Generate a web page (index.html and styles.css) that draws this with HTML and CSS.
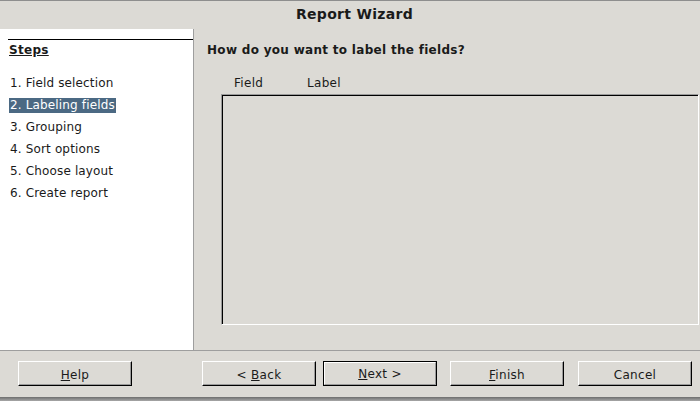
FILE: index.html
```html
<!DOCTYPE html>
<html>
<head>
<meta charset="utf-8">
<link rel="stylesheet" href="styles.css">
</head>
<body>
<div class="window">
  <div class="titlebar">Report Wizard</div>
  <div class="main">
    <div class="steps">
      <div class="steps-head"><span class="steps-title">Steps</span></div>
      <ol class="step-list">
        <li class="step">1. Field selection</li>
        <li class="step"><span class="selected">2. Labeling fields</span></li>
        <li class="step">3. Grouping</li>
        <li class="step">4. Sort options</li>
        <li class="step">5. Choose layout</li>
        <li class="step">6. Create report</li>
      </ol>
    </div>
    <div class="content">
      <div class="question">How do you want to label the fields?</div>
      <div class="columns">
        <span class="col-field">Field</span>
        <span class="col-label">Label</span>
      </div>
      <div class="listbox"></div>
    </div>
  </div>
  <div class="buttonbar">
    <button class="btn btn-help"><u>H</u>elp</button>
    <div class="nav">
      <button class="btn">&lt; <u>B</u>ack</button>
      <button class="btn btn-default"><span class="inner"><u>N</u>ext &gt;</span></button>
      <button class="btn btn-finish"><u>F</u>inish</button>
      <button class="btn">Cancel</button>
    </div>
  </div>
  <div class="bottom-edge"></div>
</div>
</body>
</html>
```

FILE: styles.css
```css
* { box-sizing: border-box; }
html, body {
  margin: 0;
  padding: 0;
  background: #dcdad5;
}
body {
  font-family: "DejaVu Sans", "Liberation Sans", sans-serif;
  font-size: 12px;
  letter-spacing: 0.3px;
  color: #1a1a1a;
}
.window {
  width: 700px;
  height: 401px;
  display: flex;
  flex-direction: column;
  border-top: 1px solid #8e8e8e;
  background: #dcdad5;
}
.titlebar {
  height: 28px;
  line-height: 27px;
  text-align: center;
  font-weight: bold;
  font-size: 14px;
  padding-left: 9px;
  color: #1a1a1a;
}
.main {
  display: flex;
  height: 323px;
  border-bottom: 1px solid #9e9e9e;
}
.steps {
  width: 194px;
  background: #fff;
  border-right: 1px solid #9e9e9e;
  padding-top: 10px;
}
.steps-head {
  margin-left: 8px;
  border-top: 1px solid #000;
  padding-top: 2px;
  padding-left: 1px;
  line-height: 16px;
}
.steps-title {
  font-weight: bold;
  text-decoration: underline;
}
.step-list {
  list-style: none;
  margin: 14px 0 0 0;
  padding: 0 0 0 9px;
  letter-spacing: 0.15px;
}
.step {
  height: 22px;
  line-height: 22px;
  padding-left: 1px;
}
.selected {
  display: inline-block;
  background: #4b6983;
  color: #fff;
  line-height: 15px;
  height: 15px;
  margin-left: -1px;
  padding: 0 1px;
}
.content {
  flex: 1;
  padding: 13px 0 0 13px;
}
.question {
  font-weight: bold;
  line-height: 16px;
}
.columns {
  margin-top: 17px;
  line-height: 16px;
  display: flex;
  padding-left: 27px;
}
.col-field { width: 73px; }
.listbox {
  margin-top: 3px;
  margin-left: 14px;
  width: 478px;
  height: 231px;
  border: 1px solid;
  border-color: #9a9a9a #fff #fff #9a9a9a;
  box-shadow: inset 1px 1px 0 #000;
  background: #dcdad5;
}
.buttonbar {
  height: 45px;
  display: flex;
  align-items: flex-start;
  padding: 10px 0 0 18px;
}
.nav {
  display: flex;
  margin-left: 70px;
}
.btn {
  font-family: inherit;
  font-size: 12px;
  letter-spacing: 0.3px;
  color: #1a1a1a;
  width: 114px;
  height: 25px;
  padding: 2px 0 0 0;
  margin: 0;
  background: #dcdad5;
  border: 1px solid;
  border-color: #fff #000 #000 #fff;
  box-shadow: inset -1px -1px 0 #9a9a9a;
  border-radius: 0;
  line-height: 20px;
}
.nav .btn { margin-right: 7px; }
.nav .btn-default { margin-right: 13px; }
.nav .btn-finish { margin-right: 14px; }
.btn-default {
  border: 1px solid #000;
  box-shadow: none;
  padding: 0;
}
.btn-default .inner {
  display: block;
  height: 23px;
  line-height: 20px;
  padding-top: 1px;
  border: 1px solid;
  border-color: #fff #9a9a9a #9a9a9a #fff;
}
.bottom-edge {
  height: 4px;
  margin-top: 1px;
  background: linear-gradient(#6e6e6e, #a8a8a8);
}
```
